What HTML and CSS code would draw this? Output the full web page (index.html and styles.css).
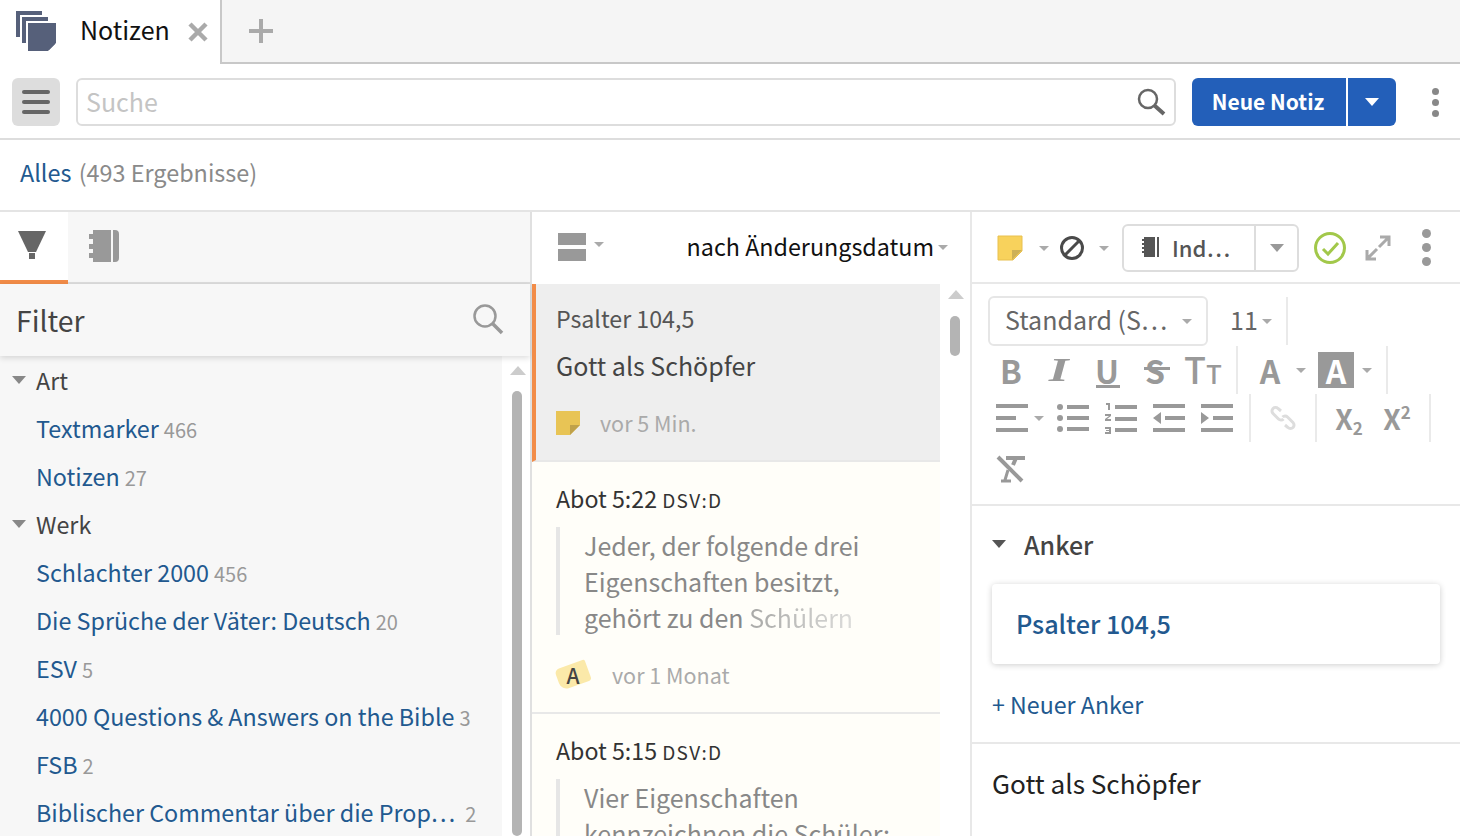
FILE: index.html
```html
<!DOCTYPE html>
<html lang="de">
  <head>
    <meta charset="UTF-8" />
    <title>Notizen</title>
    <link rel="stylesheet" href="styles.css">
  </head>
  <body>
    <div class="tabbar">
      <div class="tab">
        <svg class="tab-icon" width="40" height="40" viewBox="0 0 40 40" fill="#56607a">
          <path d="M0 0h26v4H4v22H0z"/>
          <path d="M6 6h26v4H10v22H6z"/>
          <path d="M12 12h28v20l-8 8H12z"/>
          <path d="M33 33h6l-6 6z"/>
        </svg>
        <span class="tab-title">Notizen</span>
        <svg width="20" height="20" viewBox="0 0 20 20"><path d="M2 2l16 16M18 2L2 18" stroke="#aaa" stroke-width="4.500"/></svg>
      </div>
      <div class="tab-add">
        <svg width="24" height="24" viewBox="0 0 24 24"><path d="M12 0v24M0 12h24" stroke="#aaa" stroke-width="4"/></svg>
      </div>
    </div>

    <div class="toolbar">
      <button class="menu-btn"><span></span><span></span><span></span></button>
      <div class="search">
        <span class="search-text">Suche</span>
        <svg width="30" height="30" viewBox="0 0 30 30" fill="none" stroke="#666"><circle cx="12" cy="12" r="9" stroke-width="2.500"/><path d="M18.500 18.500L28 27" stroke-width="4"/></svg>
      </div>
      <div class="new-btn">
        <span class="new-label">Neue Notiz</span>
        <span class="new-caret"><i class="caret caret-white"></i></span>
      </div>
      <div class="dots dots-top"><span></span><span></span><span></span></div>
    </div>

    <div class="results">
      <a class="link">Alles</a> <span class="results-count">(493 Ergebnisse)</span>
    </div>

    <div class="main">
      <section class="col-left">
        <div class="left-tabs">
          <div class="left-tab active">
            <svg width="30" height="30" viewBox="0 0 30 30"><path d="M1 1h28L19 22h-8z" fill="#666"/><path d="M12 23h6v6h-6z" fill="#666"/></svg>
          </div>
          <div class="left-tab">
            <svg width="30" height="32" viewBox="0 0 30 32"><path d="M4 0h18v32H4zM0 4h4v5H0zM0 14h4v5H0zM0 23h4v5H0zM24 0h2a4 4 0 0 1 4 4v24a4 4 0 0 1-4 4h-2z" fill="#999"/></svg>
          </div>
        </div>
        <div class="filter-head">
          <span>Filter</span>
          <svg width="32" height="32" viewBox="0 0 32 32" fill="none" stroke="#999"><circle cx="13" cy="13" r="10.500" stroke-width="2.500"/><path d="M20.500 20.500L30 30" stroke-width="3.500"/></svg>
        </div>
        <div class="filter-body">
          <ul class="tree">
            <li class="tree-head"><i class="caret"></i>Art</li>
            <li class="tree-item"><a>Textmarker</a> <small>466</small></li>
            <li class="tree-item"><a>Notizen</a> <small>27</small></li>
            <li class="tree-head"><i class="caret"></i>Werk</li>
            <li class="tree-item"><a>Schlachter 2000</a> <small>456</small></li>
            <li class="tree-item"><a>Die Sprüche der Väter: Deutsch</a> <small>20</small></li>
            <li class="tree-item"><a>ESV</a> <small>5</small></li>
            <li class="tree-item"><a>4000 Questions &amp; Answers on the Bible</a> <small>3</small></li>
            <li class="tree-item"><a>FSB</a> <small>2</small></li>
            <li class="tree-item"><a>Biblischer Commentar über die Prop…</a> <small class="wide">2</small></li>
          </ul>
          <div class="scroll scroll-left"><i class="arrow-up"></i><div class="thumb thumb-long"></div></div>
        </div>
      </section>

      <section class="col-mid">
        <div class="mid-head">
          <div class="layout-pick">
            <svg width="28" height="28" viewBox="0 0 28 28"><path d="M0 0h28v12H0zM0 16h28v12H0z" fill="#999"/></svg>
            <i class="caret caret-small"></i>
          </div>
          <div class="sort">nach Änderungsdatum<i class="caret caret-small"></i></div>
        </div>
        <div class="mid-body">
          <div class="notes">
            <article class="note selected">
              <h3>Psalter 104,5</h3>
              <p class="note-title">Gott als Schöpfer</p>
              <div class="note-foot">
                <svg width="24" height="24" viewBox="0 0 24 24"><path d="M0 0h24v14l-10 10H0z" fill="#e8c455"/><path d="M14 24V14h10z" fill="#bfa14a"/></svg>
                <span>vor 5 Min.</span>
              </div>
            </article>
            <article class="note">
              <h3>Abot 5:22 <span class="version">DSV:D</span></h3>
              <blockquote>Jeder, der folgende drei Eigenschaften besitzt, gehört zu den <span class="faded">Schülern</span></blockquote>
              <div class="note-foot foot-mark">
                <span class="mark">A</span>
                <span>vor 1 Monat</span>
              </div>
            </article>
            <article class="note">
              <h3>Abot 5:15 <span class="version">DSV:D</span></h3>
              <blockquote>Vier Eigenschaften kennzeichnen die Schüler:</blockquote>
            </article>
          </div>
          <div class="scroll scroll-mid"><i class="arrow-up"></i><div class="thumb thumb-short"></div></div>
        </div>
      </section>

      <section class="col-right">
        <div class="right-head">
          <svg class="note-icon" width="26" height="26" viewBox="0 0 26 26"><path d="M1 1h24v15l-9 9H1z" fill="#f8d25c" stroke="#e8c04f"/><path d="M15 25V15h10z" fill="#cdb056"/></svg>
          <i class="caret caret-small cr1"></i>
          <svg class="ban-icon" width="26" height="26" viewBox="0 0 26 26" fill="none" stroke="#4a4a4a" stroke-width="3"><circle cx="13" cy="13" r="10.500"/><path d="M20 6L6 20"/></svg>
          <i class="caret caret-small cr2"></i>
          <div class="split">
            <div class="split-main">
              <svg width="18" height="20" viewBox="0 0 18 20"><path d="M2 0h11v20H2zM0 2h2v2H0zM0 6h2v2H0zM0 10h2v2H0zM0 14h2v2H0zM15 0h2v20h-2z" fill="#555"/></svg>
              <span>Ind…</span>
            </div>
            <div class="split-caret"><i class="caret"></i></div>
          </div>
          <svg class="check-icon" width="32" height="32" viewBox="0 0 32 32" fill="none" stroke="#a2c84a"><circle cx="16" cy="16" r="14.500" stroke-width="3"/><path d="M9 17l5 5 10-11" stroke-width="3"/></svg>
          <svg class="expand-icon" width="26" height="26" viewBox="0 0 26 26" fill="none" stroke="#aaa" stroke-width="3"><path d="M14 12L23 3M15 2h9v9M12 14l-9 9M2 15v9h9"/></svg>
          <div class="dots dots-right"><span></span><span></span><span></span></div>
        </div>

        <div class="format">
          <div class="format-row row-one">
            <div class="font-select"><span>Standard (S…</span><i class="caret caret-small"></i></div>
            <div class="font-size">11<i class="caret caret-small"></i></div>
            <div class="sep"></div>
          </div>
          <div class="format-row">
            <div class="tool letter">B</div>
            <div class="tool letter italic"><span>I</span></div>
            <div class="tool letter underline">U</div>
            <div class="tool letter strike">S</div>
            <div class="tool letter tt">T<small>T</small></div>
            <div class="sep sep-a"></div>
            <div class="tool letter tool-a">A</div>
            <i class="caret caret-small ca"></i>
            <div class="letter hilite">A</div>
            <i class="caret caret-small cb"></i>
            <div class="sep sep-b"></div>
          </div>
          <div class="format-row">
            <div class="tool tool-align">
              <svg width="32" height="28" viewBox="0 0 32 28" fill="#999"><path d="M0 0h32v4H0zM0 12h20v4H0zM0 24h32v4H0z"/></svg>
            </div>
            <i class="caret caret-small cc"></i>
            <div class="tool tool-list">
              <svg width="32" height="28" viewBox="0 0 32 28" fill="#999"><circle cx="3" cy="3" r="3"/><circle cx="3" cy="14" r="3"/><circle cx="3" cy="25" r="3"/><path d="M10 1h22v4H10zM10 12h22v4H10zM10 23h22v4H10z"/></svg>
            </div>
            <div class="tool">
              <svg width="32" height="32" viewBox="0 0 32 32" fill="#999"><path d="M10 3h22v4H10zM10 15h22v4H10zM10 26h22v4H10zM1 1h4v7H3V3H1zM0 12h6v2l-4 3h4v2H0v-2l4-3H0zM0 25h6v7H0v-2h4v-1H1v-1h3v-1H0z"/></svg>
            </div>
            <div class="tool">
              <svg width="32" height="28" viewBox="0 0 32 28" fill="#999"><path d="M0 0h32v4H0zM12 12h20v4H12zM0 24h32v4H0zM0 14l8-6v12z"/></svg>
            </div>
            <div class="tool">
              <svg width="32" height="28" viewBox="0 0 32 28" fill="#999"><path d="M0 0h32v4H0zM12 12h20v4H12zM0 24h32v4H0zM8 14L0 8v12z"/></svg>
            </div>
            <div class="sep sep-c"></div>
            <div class="tool tool-link">
              <svg width="26" height="26" viewBox="0 0 26 26" fill="none" stroke="#ddd" stroke-width="3"><path d="M11 6L8 3.500a3.500 3.500 0 0 0-5 5L8.500 14a3.500 3.500 0 0 0 5 0M15 20l3 2.500a3.500 3.500 0 0 0 5-5L17.500 12a3.500 3.500 0 0 0-5 0"/></svg>
            </div>
            <div class="sep sep-d"></div>
            <div class="tool letter script"><span>X<sub>2</sub></span></div>
            <div class="tool letter script"><span>X<sup>2</sup></span></div>
            <div class="sep sep-e"></div>
          </div>
          <div class="format-row row-last">
            <div class="tool tool-clear">
              <svg width="30" height="28" viewBox="0 0 30 28" fill="none" stroke="#999"><path d="M10 3h19M20 3l-3 7" stroke-width="4"/><path d="M2 2l24 24" stroke-width="4"/><path d="M12 15l-3 10M5 26h10" stroke-width="3"/></svg>
            </div>
          </div>
        </div>

        <div class="anchor">
          <h4><i class="caret"></i>Anker</h4>
          <div class="anchor-card"><a>Psalter 104,5</a></div>
          <a class="anchor-new">+ Neuer Anker</a>
        </div>

        <div class="editor">Gott als Schöpfer</div>
      </section>
    </div>
  </body>
</html>
```

FILE: styles.css
```css
* {
  box-sizing: border-box;
}
html,
body {
  margin: 0;
  height: 836px;
  overflow: hidden;
  background: #fff;
  font-family: "Noto Sans CJK SC", "Noto Sans", sans-serif;
}
a {
  color: #22598f;
}

/* carets */
.caret {
  display: inline-block;
  width: 0;
  height: 0;
  border-left: 7px solid transparent;
  border-right: 7px solid transparent;
  border-top: 8px solid #888;
}
.caret-small {
  border-left-width: 5px;
  border-right-width: 5px;
  border-top: 5px solid #aaa;
}
.caret-white {
  border-top-color: #fff;
}

/* tab bar */
.tabbar {
  display: flex;
  height: 64px;
  background: #f5f5f5;
  border-bottom: 2px solid #c8c8c8;
}
.tab {
  display: flex;
  align-items: center;
  width: 222px;
  height: 64px;
  padding-left: 16px;
  background: #fff;
  border-right: 2px solid #c8c8c8;
}
.tab-icon {
  margin-top: -2px;
}
.tab-title {
  margin: -6px 18px 0 24px;
  font-size: 25px;
  line-height: 32px;
  color: #111;
}
.tab-add {
  display: flex;
  align-items: center;
  padding-left: 27px;
}

/* search toolbar */
.toolbar {
  display: flex;
  align-items: center;
  height: 76px;
  padding: 2px 12px 0;
  border-bottom: 2px solid #ddd;
}
.menu-btn {
  display: flex;
  flex-direction: column;
  justify-content: center;
  gap: 6px;
  width: 48px;
  height: 48px;
  padding: 0 10px;
  background: #ddd;
  border: none;
  border-radius: 6px;
}
.menu-btn span {
  height: 4px;
  border-radius: 2px;
  background: #666;
}
.search {
  display: flex;
  align-items: center;
  justify-content: space-between;
  width: 1100px;
  height: 48px;
  margin-left: 16px;
  padding: 0 8px;
  border: 2px solid #ddd;
  border-radius: 6px;
}
.search-text {
  margin-top: -2px;
  font-size: 25px;
  color: #c4c4c4;
}
.new-btn {
  display: flex;
  height: 48px;
  margin-left: 16px;
  color: #fff;
  font-size: 21px;
  font-weight: 700;
}
.new-label {
  display: flex;
  align-items: center;
  justify-content: center;
  width: 154px;
  padding: 0 2px 2px 0;
  background: #235fb9;
  border-radius: 6px 0 0 6px;
}
.new-caret {
  display: flex;
  align-items: center;
  justify-content: center;
  width: 48px;
  margin-left: 2px;
  background: #235fb9;
  border-radius: 0 6px 6px 0;
}
.dots {
  display: flex;
  flex-direction: column;
  gap: 4px;
}
.dots span {
  width: 7px;
  height: 7px;
  border-radius: 50%;
  background: #888;
}
.dots-top {
  margin-left: 36px;
}

/* results line */
.results {
  height: 70px;
  padding: 12px 20px 0;
  font-size: 23.400px;
  line-height: 40px;
}
.results-count {
  margin-left: 2px;
  color: #8a8a8a;
}

/* three columns */
.main {
  display: flex;
  height: 626px;
  border-top: 2px solid #e4e4e4;
}
.col-left {
  width: 532px;
  background: #f7f7f7;
  border-right: 2px solid #e0e0e0;
}
.col-mid {
  width: 440px;
  border-right: 2px solid #e8e8e8;
}
.col-right {
  width: 488px;
}

/* left column */
.left-tabs {
  display: flex;
  height: 72px;
  border-bottom: 2px solid #ddd;
}
.left-tab {
  display: flex;
  justify-content: center;
  width: 68px;
  height: 72px;
  padding: 18px 4px 0 0;
}
.left-tab.active {
  background: #fff;
  border-bottom: 4px solid #f28c48;
}
.left-tab + .left-tab {
  padding: 18px 0 0 4px;
}
.filter-head {
  position: relative;
  display: flex;
  align-items: center;
  justify-content: space-between;
  height: 72px;
  padding: 0 26px 2px 16px;
  font-size: 28.400px;
  color: #444;
  box-shadow: 0 2px 6px rgba(0, 0, 0, 0.14);
}
.filter-body {
  display: flex;
  height: 480px;
  overflow: hidden;
}
.tree {
  width: 502px;
  margin: 0;
  padding: 0;
  list-style: none;
  font-size: 23.300px;
}
.tree li {
  display: flex;
  align-items: baseline;
  height: 48px;
  line-height: 48px;
  white-space: nowrap;
}
.tree-head {
  padding-left: 12px;
  color: #444;
}
.tree-head .caret {
  margin-right: 10px;
  align-self: center;
  border-left-width: 7px;
  border-right-width: 7px;
}
.tree-item {
  padding-left: 36px;
}
.tree small {
  margin-left: 5px;
  font-size: 20px;
  color: #999;
}
.tree small.wide {
  margin-left: 10px;
}
.scroll {
  display: flex;
  flex-direction: column;
  align-items: center;
  background: #fff;
}
.scroll-left {
  width: 28px;
  padding: 10px 0 0 3px;
}
.arrow-up {
  width: 0;
  height: 0;
  border-left: 8px solid transparent;
  border-right: 8px solid transparent;
  border-bottom: 9px solid #ccc;
}
.thumb {
  width: 10px;
  margin-top: 16px;
  margin-right: 2px;
  border-radius: 5px;
  background: #b4b4b4;
}
.thumb-long {
  height: 460px;
}
.thumb-short {
  height: 40px;
}

/* middle column */
.mid-head {
  display: flex;
  align-items: center;
  justify-content: space-between;
  height: 72px;
  padding: 0 22px 0 26px;
}
.layout-pick {
  display: flex;
  align-items: center;
  gap: 8px;
  margin-top: -2px;
}
.layout-pick .caret {
  margin-top: -6px;
}
.sort {
  display: flex;
  align-items: center;
  margin-top: -4px;
  font-size: 23.300px;
  color: #111;
}
.sort .caret {
  margin: 2px 0 0 4px;
}
.mid-body {
  position: relative;
  display: flex;
  height: 552px;
  overflow: hidden;
  box-shadow: inset 0 4px 4px -3px rgba(0, 0, 0, 0.18);
}
.notes {
  width: 408px;
}
.note {
  padding: 14px 24px 0;
  height: 252px;
  background: #fffef9;
  border-bottom: 2px solid #e8e8e8;
}
.note.selected {
  height: 178px;
  padding-left: 20px;
  background: #eee;
  border-left: 4px solid #f28c48;
}
.note h3 {
  margin: 0;
  font-size: 23.200px;
  font-weight: 400;
  line-height: 44px;
  color: #333;
}
.selected h3 {
  margin-top: -2px;
  color: #555;
}
.note-title {
  margin: 3px 0 0;
  font-size: 25px;
  line-height: 44px;
  color: #444;
}
.version {
  font-size: 19px;
  letter-spacing: 1.300px;
}
.note blockquote {
  margin: 5px 0 0;
  padding-left: 24px;
  border-left: 4px solid #e6e6e6;
  font-size: 25px;
  line-height: 36px;
  color: #888;
  height: 108px;
  overflow: hidden;
}
.faded {
  background: linear-gradient(90deg, #a8a8a6, #dcdcda);
  -webkit-background-clip: text;
  background-clip: text;
  color: transparent;
}
.note-foot {
  display: flex;
  align-items: center;
  gap: 20px;
  margin-top: 20px;
  font-size: 21.500px;
  color: #aaa;
}
.foot-mark {
  position: relative;
  z-index: 0;
  gap: 22px;
  margin-top: 24px;
}
.mark {
  position: relative;
  width: 34px;
  height: 26px;
  text-align: center;
  font-size: 21px;
  font-weight: 500;
  line-height: 26px;
  color: #444;
}
.mark::before {
  content: "";
  position: absolute;
  z-index: -1;
  inset: 2px 1px;
  background: #fbe9a9;
  border-radius: 5px 2px 3px 8px;
  transform: rotate(-20deg);
}
.scroll-mid {
  width: 30px;
  padding: 6px 0 0 2px;
}
.scroll-mid .thumb {
  margin-top: 17px;
}

/* right column */
.right-head {
  display: flex;
  align-items: center;
  height: 72px;
  padding: 2px 0 0 25px;
  border-bottom: 2px solid #e8e8e8;
}
.cr1 {
  margin-left: 16px;
}
.ban-icon {
  margin-left: 10px;
}
.cr2 {
  margin-left: 14px;
}
.split {
  display: flex;
  width: 177px;
  height: 48px;
  margin-left: 13px;
  border: 2px solid #ddd;
  border-radius: 6px;
}
.split-main {
  display: flex;
  align-items: center;
  gap: 12px;
  width: 132px;
  padding: 0 0 2px 18px;
  border-right: 2px solid #ddd;
  font-size: 22px;
  font-weight: 500;
  color: #555;
}
.split-caret {
  display: flex;
  flex: 1;
  align-items: center;
  justify-content: center;
}
.split-caret .caret {
  border-top-color: #999;
}
.check-icon {
  margin-left: 15px;
}
.expand-icon {
  margin-left: 19px;
}
.dots-right {
  margin-left: 31px;
  gap: 5px;
  margin-top: -2px;
}
.dots-right span {
  width: 9px;
  height: 9px;
  background: #999;
}

/* format toolbar */
.format {
  height: 222px;
  padding: 12px 0 0 15px;
  border-bottom: 2px solid #e8e8e8;
}
.format-row {
  display: flex;
  align-items: center;
  height: 48px;
}
.row-one {
  height: 50px;
}
.row-last {
  margin-top: 3px;
}
.font-select {
  display: flex;
  align-items: center;
  justify-content: space-between;
  width: 220px;
  height: 50px;
  margin-left: 1px;
  padding: 0 14px 4px 15px;
  border: 2px solid #e6e6e6;
  border-radius: 6px;
  font-size: 25px;
  white-space: nowrap;
  color: #666;
}
.font-select .caret {
  margin-top: 4px;
}
.font-size {
  display: flex;
  align-items: center;
  gap: 4px;
  width: 78px;
  padding: 0 0 4px 22px;
  font-size: 25px;
  color: #666;
}
.font-size .caret {
  margin-top: 4px;
}
.sep {
  width: 2px;
  height: 48px;
  background: #eaeaea;
}
.tool {
  position: relative;
  display: flex;
  align-items: center;
  justify-content: center;
  width: 48px;
  height: 48px;
}
.letter {
  font-size: 32px;
  font-weight: 700;
  line-height: 44px;
  color: #999;
}
.italic {
  font-family: "Liberation Serif", serif;
  font-size: 34px;
  font-style: italic;
}
.italic span {
  transform: scaleX(1.5);
}
.underline::after,
.strike::after {
  content: "";
  position: absolute;
  height: 3px;
  background: #999;
}
.underline::after {
  left: 13px;
  right: 11px;
  bottom: 6px;
}
.strike::after {
  left: 13px;
  right: 9px;
  top: 21px;
}
.tt {
  align-items: baseline;
  font-weight: 500;
  font-size: 36px;
}
.tt small {
  font-size: 26px;
}
.sep-a {
  margin-left: 9px;
}
.tool-a {
  width: 64px;
}
.ca {
  margin-left: -6px;
}
.hilite {
  display: flex;
  align-items: center;
  justify-content: center;
  width: 36px;
  height: 36px;
  margin-left: 12px;
  background: #999;
  color: #fff;
}
.cb {
  margin-left: 8px;
}
.sep-b {
  margin-left: 14px;
}
.tool-align {
  width: 49px;
}
.cc {
  margin-left: -2px;
  margin-right: 5px;
}
.tool-list {
  width: 48px;
}
.sep-c {
  margin-left: 8px;
}
.tool-link {
  width: 64px;
}
.sep-e {
  margin-left: 8px;
}
.sep-d {
  margin-right: 8px;
}
.script {
  font-size: 28px;
}
.script sub,
.script sup {
  font-size: 17px;
  line-height: 0;
}
.script sub {
  vertical-align: -5px;
}
.script sup {
  vertical-align: 11px;
}

/* anchors */
.anchor {
  height: 238px;
  padding: 0 20px;
  border-bottom: 2px solid #e8e8e8;
}
.anchor h4 {
  display: flex;
  align-items: center;
  margin: 0;
  height: 78px;
  padding-bottom: 3px;
  font-size: 25px;
  font-weight: 500;
  color: #444;
}
.anchor h4 .caret {
  margin-right: 18px;
  border-top-color: #555;
}
.anchor-card {
  display: flex;
  align-items: center;
  height: 80px;
  padding: 0 0 2px 24px;
  border-radius: 4px;
  box-shadow: 0 1px 6px rgba(0, 0, 0, 0.2);
  font-size: 25.200px;
  font-weight: 500;
}
.anchor-new {
  display: block;
  margin-top: 23px;
  font-size: 23.200px;
}
.editor {
  padding: 17px 20px;
  font-size: 26.200px;
  line-height: 44px;
  color: #222;
}
```
